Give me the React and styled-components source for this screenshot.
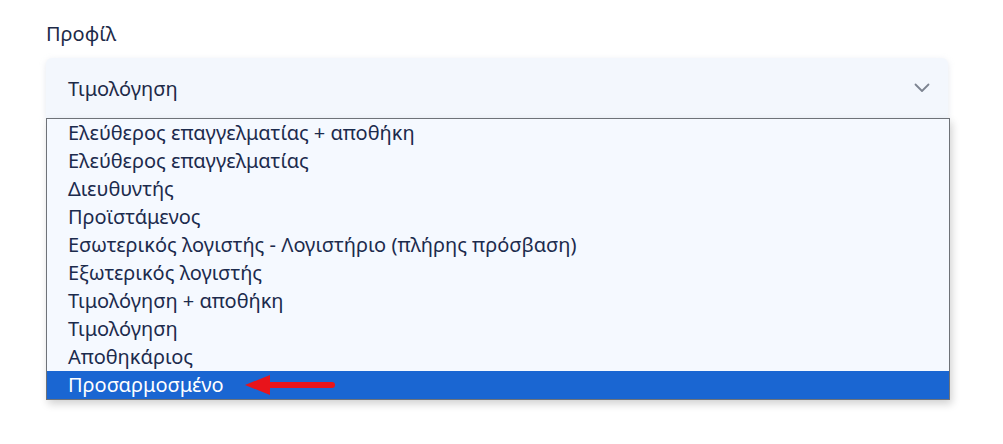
import React from "react";
import styled, { createGlobalStyle } from "styled-components";

const GlobalStyle = createGlobalStyle`
  body {
    margin: 0;
    background: #ffffff;
    font-family: "Noto Sans", "Open Sans", sans-serif;
  }
`;

const Page = styled.div`
  padding: 20px 55px 0 46px;
  width: 1003px;
  height: 444px;
  box-sizing: border-box;
`;

const Label = styled.div`
  font-size: 20px;
  line-height: 28px;
  color: #1d2a48;
  margin-bottom: 10px;
`;

const SelectBox = styled.div`
  display: flex;
  align-items: center;
  justify-content: space-between;
  height: 60px;
  padding: 0 18px 0 22px;
  background: #f3f7fd;
  border-radius: 6px 6px 0 0;
  box-shadow: 0 2px 6px rgba(180, 190, 210, 0.35);
  font-size: 20px;
  color: #1d2a48;
`;

const List = styled.ul`
  list-style: none;
  margin: 0 -2px 0 0;
  padding: 0;
  background: #f5f9ff;
  border: 1px solid #6e7278;
  box-shadow: 2px 4px 8px rgba(0, 0, 0, 0.18);
`;

const Option = styled.li`
  height: 28px;
  line-height: 28px;
  padding-left: 21px;
  font-size: 20px;
  color: ${(p) => (p.$active ? "#ffffff" : "#1c2b4d")};
  background: ${(p) => (p.$active ? "#1a66d2" : "transparent")};
`;

const OptionText = styled.span`
  position: relative;
`;

const Arrow = styled.svg`
  position: absolute;
  left: calc(100% + 20px);
  top: 50%;
  transform: translateY(-50%);
`;

const options = [
  "Ελεύθερος επαγγελματίας + αποθήκη",
  "Ελεύθερος επαγγελματίας",
  "Διευθυντής",
  "Προϊστάμενος",
  "Εσωτερικός λογιστής - Λογιστήριο (πλήρης πρόσβαση)",
  "Εξωτερικός λογιστής",
  "Τιμολόγηση + αποθήκη",
  "Τιμολόγηση",
  "Αποθηκάριος",
  "Προσαρμοσμένο",
];

function Chevron() {
  return (
    <svg width="16" height="10" viewBox="0 0 16 10">
      <path d="M1.5 1.5 L8 8 L14.5 1.5" fill="none" stroke="#7d8491" strokeWidth="1.8" strokeLinecap="round" strokeLinejoin="round" />
    </svg>
  );
}

function RedArrow() {
  return (
    <Arrow width="92" height="24" viewBox="0 0 92 24">
      <path d="M88 12 L22 12" stroke="#e8141b" strokeWidth="6" strokeLinecap="round" />
      <path d="M1 12 L26 2 L26 22 Z" fill="#e8141b" />
    </Arrow>
  );
}

export default function App() {
  const last = options.length - 1;
  return (
    <>
      <GlobalStyle />
      <Page>
        <Label>Προφίλ</Label>
        <SelectBox>
          <span>Τιμολόγηση</span>
          <Chevron />
        </SelectBox>
        <List>
          {options.map((o, i) => (
            <Option key={o} $active={i === last}>
              <OptionText>
                {o}
                {i === last && <RedArrow />}
              </OptionText>
            </Option>
          ))}
        </List>
      </Page>
    </>
  );
}
